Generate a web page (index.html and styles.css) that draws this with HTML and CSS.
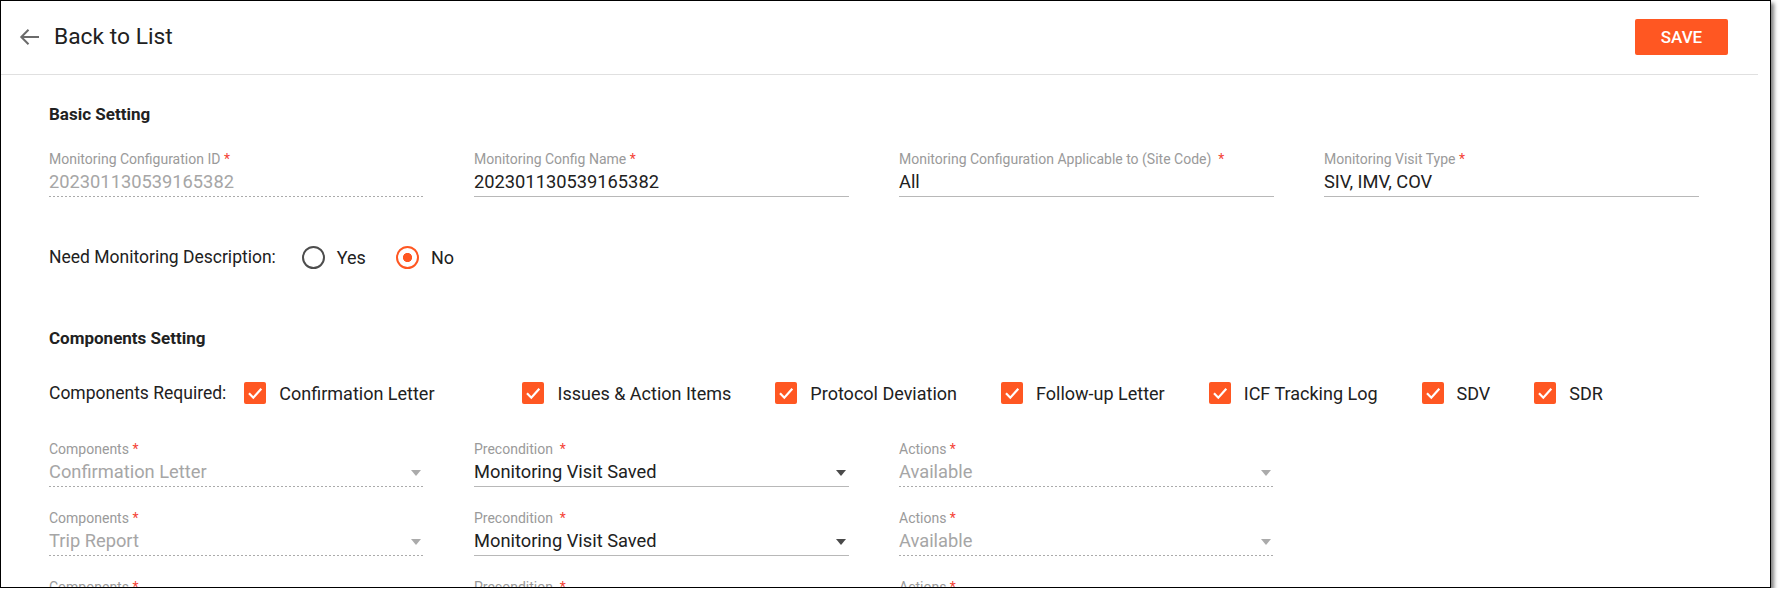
FILE: index.html
```html
<!DOCTYPE html>
<html>
<head>
<title>Monitoring Configuration</title>
<link rel="stylesheet" href="styles.css">
</head>
<body>

<div class="frame">
    <div class="page">
        <div class="page-header">
            <a class="back-link" href="#">
                <svg class="back-icon" width="21" height="18" viewBox="0 0 21 18">
                    <path d="M20 9H2.5M9.5 1.8L2.3 9l7.2 7.2" fill="none" stroke="#6b6b6b" stroke-width="2"/>
                </svg>
                <span>Back to List</span>
            </a>
            <button class="btn-save">SAVE</button>
        </div>

        <div class="page-body">
            <h3 class="section-title">Basic Setting</h3>
            <div class="field-grid">
                <div class="field field-disabled">
                    <label class="field-label">Monitoring Configuration ID <span class="req">*</span></label>
                    <div class="field-input">202301130539165382</div>
                </div>
                <div class="field">
                    <label class="field-label">Monitoring Config Name <span class="req">*</span></label>
                    <div class="field-input">202301130539165382</div>
                </div>
                <div class="field">
                    <label class="field-label">Monitoring Configuration Applicable to (Site Code)&nbsp; <span class="req">*</span></label>
                    <div class="field-input">All</div>
                </div>
                <div class="field">
                    <label class="field-label">Monitoring Visit Type <span class="req">*</span></label>
                    <div class="field-input">SIV, IMV, COV</div>
                </div>
            </div>

            <div class="option-row radio-row">
                <span class="option-title">Need Monitoring Description:</span>
                <label class="radio"><span class="radio-mark"></span>Yes</label>
                <label class="radio radio-checked"><span class="radio-mark"></span>No</label>
            </div>

            <h3 class="section-title section-title-next">Components Setting</h3>
            <div class="option-row check-row" id="components-required">
                <span class="option-title">Components Required:</span>
            </div>

            <div class="component-list" id="component-list"></div>
        </div>
    </div>
</div>

<script>
    const required = ["Confirmation Letter", "Issues & Action Items", "Protocol Deviation",
                      "Follow-up Letter", "ICF Tracking Log", "SDV", "SDR"];
    const rows = [
        { component: "Confirmation Letter", precondition: "Monitoring Visit Saved", action: "Available" },
        { component: "Trip Report", precondition: "Monitoring Visit Saved", action: "Available" },
        { component: "Follow-up Letter", precondition: "Monitoring Visit Saved", action: "Available" }
    ];

    const checkRow = document.getElementById('components-required');
    required.forEach(function (name, i) {
        let item = document.createElement('label');
        item.className = i === 0 ? 'check check-first' : 'check';
        item.innerHTML = '<span class="check-box"><svg width="22" height="22" viewBox="0 0 22 22">' +
            '<path d="M5 11.3l4.3 4.4 8-9" fill="none" stroke="#fff" stroke-width="2.2"/></svg></span>';
        item.appendChild(document.createTextNode(name));
        checkRow.appendChild(item);
    });

    function selectField(label, value, disabled) {
        return '<div class="field' + (disabled ? ' field-disabled' : '') + '">' +
            '<label class="field-label">' + label + '</label>' +
            '<div class="field-input field-select">' + value + '</div></div>';
    }

    const list = document.getElementById('component-list');
    rows.forEach(function (row) {
        let grid = document.createElement('div');
        grid.className = 'field-grid component-row';
        grid.innerHTML =
            selectField('Components <span class="req">*</span>', row.component, true) +
            selectField('Precondition&nbsp; <span class="req">*</span>', row.precondition, false) +
            selectField('Actions <span class="req">*</span>', row.action, true);
        list.appendChild(grid);
    });
</script>

</body>
</html>
```

FILE: styles.css
```css
body {
    margin: 0;
    background: #fff;
    font-family: Roboto, "Noto Sans", Arial, sans-serif;
    color: #212121;
}
.frame {
    width: 1769px;
    height: 586px;
    border: 1px solid #000;
    box-shadow: 3px 3px 4px rgba(0, 0, 0, 0.5);
    overflow: hidden;
    background: #fff;
}
.page {
    width: 1757px;
}
.page-header {
    display: flex;
    justify-content: space-between;
    align-items: center;
    height: 71px;
    padding: 0 30px 2px 18px;
    border-bottom: 1px solid #e0e0e0;
}
.back-link {
    display: flex;
    align-items: center;
    color: #212121;
    text-decoration: none;
    font-size: 22.8px;
}
.back-icon {
    margin-right: 14px;
}
.btn-save {
    width: 93px;
    height: 36px;
    border: none;
    border-radius: 2px;
    background-color: #ff5722;
    color: #fff;
    font-family: Roboto, sans-serif;
    font-size: 17px;
    font-weight: 500;
    cursor: pointer;
}
.page-body {
    padding-left: 48px;
}
.section-title {
    margin: 29px 0 0;
    font-size: 17px;
    line-height: 20px;
    font-weight: 700;
}
.section-title-next {
    margin-top: 58px;
}
.field-grid {
    display: grid;
    grid-template-columns: repeat(4, 375px);
    column-gap: 50px;
    margin-top: 27px;
}
.field-label {
    display: block;
    font-size: 14px;
    line-height: 16px;
    margin-bottom: 3px;
    color: #9a9a9a;
    white-space: nowrap;
}
.req {
    color: #f44336;
}
.field-input {
    position: relative;
    height: 24px;
    font-size: 18.3px;
    line-height: 24px;
    padding-bottom: 2px;
    border-bottom: 1px solid #b8b8b8;
    color: #212121;
}
.field-disabled .field-input {
    color: #a6a6a6;
    border-bottom-color: transparent;
    background-image: linear-gradient(to right, #ababab 55%, transparent 0);
    background-size: 4px 1px;
    background-repeat: repeat-x;
    background-position: left bottom;
    background-origin: border-box;
}
.field-select::after {
    content: "";
    position: absolute;
    right: 3px;
    top: 10px;
    border-left: 5.5px solid transparent;
    border-right: 5.5px solid transparent;
    border-top: 6px solid #4a4a4a;
}
.field-disabled .field-select::after {
    border-top-color: #ababab;
}
.option-row {
    display: flex;
    align-items: center;
    height: 26px;
    font-size: 18px;
}
.option-title {
    font-size: 17.5px;
}
.radio-row {
    margin-top: 47px;
}
.radio-row .option-title {
    margin-right: 26px;
}
.radio {
    display: flex;
    align-items: center;
    margin-right: 30px;
}
.radio-mark {
    width: 23px;
    height: 23px;
    box-sizing: border-box;
    border: 2.3px solid #4d4d4d;
    border-radius: 50%;
    margin-right: 12px;
}
.radio-checked .radio-mark {
    border-color: #ff5722;
    background: radial-gradient(circle, #ff5722 0 4.3px, transparent 4.8px);
}
.check-row {
    margin-top: 33px;
    height: 24px;
}
.check-row .option-title {
    margin-right: 18px;
}
.check {
    display: flex;
    align-items: center;
    margin-right: 44px;
}
.check-first {
    margin-right: 88px;
}
.check-box {
    display: flex;
    width: 22px;
    height: 22px;
    border-radius: 2px;
    background-color: #ff5722;
    margin-right: 13px;
}
.component-list {
    margin-top: 36px;
}
.component-row {
    margin-top: 0;
    margin-bottom: 23px;
}
```
